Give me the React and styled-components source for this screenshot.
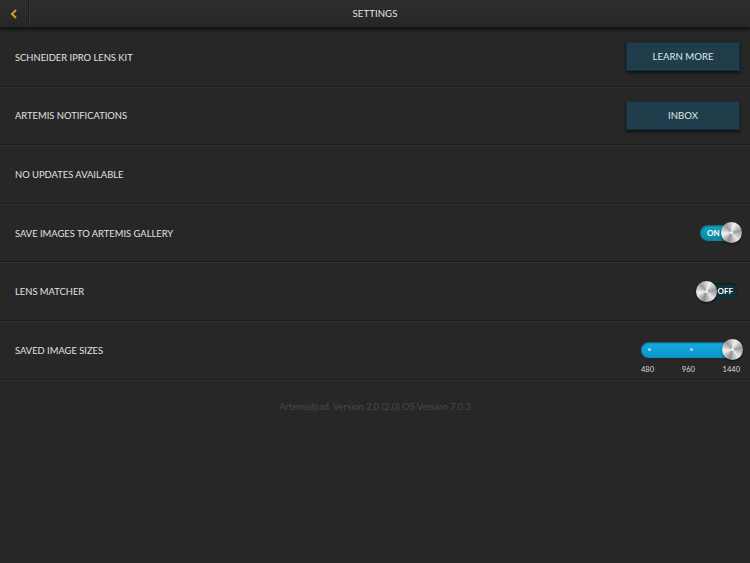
import React from 'react';
import styled, { createGlobalStyle } from 'styled-components';

const Global = createGlobalStyle`
  html, body { margin: 0; padding: 0; background: #272727; }
  body { font-family: "Gill Sans", Lato, "Open Sans", sans-serif; }
`

const Page = styled.div`
  width: 750px;
  height: 563px;
  background: #272727;
  display: flex;
  flex-direction: column;
  overflow: hidden;
`

const Header = styled.div`
  height: 27px;
  display: flex;
  align-items: center;
  background: linear-gradient(#2e2e2e, #262626);
  border-bottom: 1px solid #141414;
  box-shadow: 0 2px 3px rgba(0, 0, 0, 0.5);
  position: relative;
  z-index: 1;
`

const Back = styled.div`
  width: 28px;
  height: 100%;
  display: flex;
  align-items: center;
  justify-content: center;
  border-right: 1px solid #1c1c1c;
  box-shadow: 1px 0 0 #363636;
`

const Title = styled.div`
  flex: 1;
  text-align: center;
  color: #e4e4e4;
  font-size: 9.6px;
  letter-spacing: 0.1px;
  padding-right: 29px;
`

const Row = styled.div`
  height: 57.6px;
  display: flex;
  align-items: center;
  justify-content: space-between;
  padding: 0 8px 0 15px;
  border-bottom: 1px solid #1c1c1c;
  box-shadow: 0 1px 0 #303030;
`

const Label = styled.div`
  color: #e2e2e2;
  font-size: 9.4px;
  margin-top: 1px;
`

const Button = styled.div`
  width: 112px;
  height: 27px;
  display: flex;
  align-items: center;
  justify-content: center;
  background: #1f3d4a;
  border: 1px solid #173038;
  box-shadow: 0 2px 3px rgba(0, 0, 0, 0.6);
  color: #dfe6e8;
  font-size: 9.6px;
  margin-top: ${p => p.$offset || 0}px;
  margin-right: 2px;
`

const Track = styled.div`
  width: ${p => p.$w}px;
  height: 16px;
  border-radius: 9px;
  display: flex;
  align-items: center;
  position: relative;
  background: ${p => p.$fill};
  box-shadow: inset 0 1px 2px rgba(0,0,0,0.5);
  margin-right: ${p => p.$mr || 0}px;
`

const ToggleText = styled.span`
  color: #fff;
  font-size: 8px;
  font-weight: 700;
  position: absolute;
  ${p => p.$on ? 'left: 7px;' : 'right: 5px;'}
`

const Knob = styled.div`
  width: ${p => p.$size}px;
  height: ${p => p.$size}px;
  border-radius: 50%;
  position: absolute;
  ${p => p.$left ? 'left: -2px;' : 'right: -2px;'}
  background: conic-gradient(from 20deg, #f2f2f2, #9a9a9a, #e8e8e8, #8e8e8e, #f4f4f4, #9c9c9c, #f2f2f2);
  box-shadow: 0 1px 2px rgba(0,0,0,0.7);
  display: flex;
  align-items: center;
  justify-content: center;
  &::after {
    content: '';
    width: 3px;
    height: 3px;
    border-radius: 50%;
    background: #fff;
    box-shadow: 0 0 1px #666;
  }
`

const SliderWrap = styled.div`
  display: flex;
  flex-direction: column;
  align-items: flex-end;
  margin-top: 16px;
`

const Dot = styled.div`
  width: 3px;
  height: 3px;
  border-radius: 50%;
  background: #a7dbe8;
  position: absolute;
  left: ${p => p.$x}px;
`

const Ticks = styled.div`
  width: 99px;
  display: flex;
  justify-content: space-between;
  color: #d8d8d8;
  font-size: 7.5px;
  margin-top: 7px;
  margin-right: 2px;
`

const Footer = styled.div`
  text-align: center;
  color: #474747;
  font-size: 9.4px;
  margin-top: 21px;
`

function Toggle({ on }) {
  return (
    <Track
      $w={40}
      $fill={on ? 'linear-gradient(#1aa4c4, #0c849f)' : '#10323a'}
      $mr={on ? 2 : 4}
    >
      <ToggleText $on={on}>{on ? 'ON' : 'OFF'}</ToggleText>
      <Knob $size={21} $left={!on} />
    </Track>
  )
}

export default function App() {
  return (
    <Page>
      <Global />
      <Header>
        <Back>
          <svg width="8" height="10" viewBox="0 0 8 10">
            <path d="M6 1 L2 5 L6 9" stroke="#d99a1e" strokeWidth="2" fill="none" />
          </svg>
        </Back>
        <Title>SETTINGS</Title>
      </Header>
      <Row>
        <Label>SCHNEIDER IPRO LENS KIT</Label>
        <Button $offset={-1}>LEARN MORE</Button>
      </Row>
      <Row>
        <Label>ARTEMIS NOTIFICATIONS</Label>
        <Button $offset={1}>INBOX</Button>
      </Row>
      <Row>
        <Label>NO UPDATES AVAILABLE</Label>
      </Row>
      <Row>
        <Label>SAVE IMAGES TO ARTEMIS GALLERY</Label>
        <Toggle on />
      </Row>
      <Row>
        <Label>LENS MATCHER</Label>
        <Toggle on={false} />
      </Row>
      <Row>
        <Label>SAVED IMAGE SIZES</Label>
        <SliderWrap>
          <Track $w={100} $fill="linear-gradient(#18ade2, #0b94c9)" $mr={1}>
            <Dot $x={7} />
            <Dot $x={49} />
            <Knob $size={21} />
          </Track>
          <Ticks>
            <span>480</span>
            <span>960</span>
            <span>1440</span>
          </Ticks>
        </SliderWrap>
      </Row>
      <Footer>ArtemisIpad, Version 2.0 (2.0) OS Version 7.0.3</Footer>
    </Page>
  )
}
